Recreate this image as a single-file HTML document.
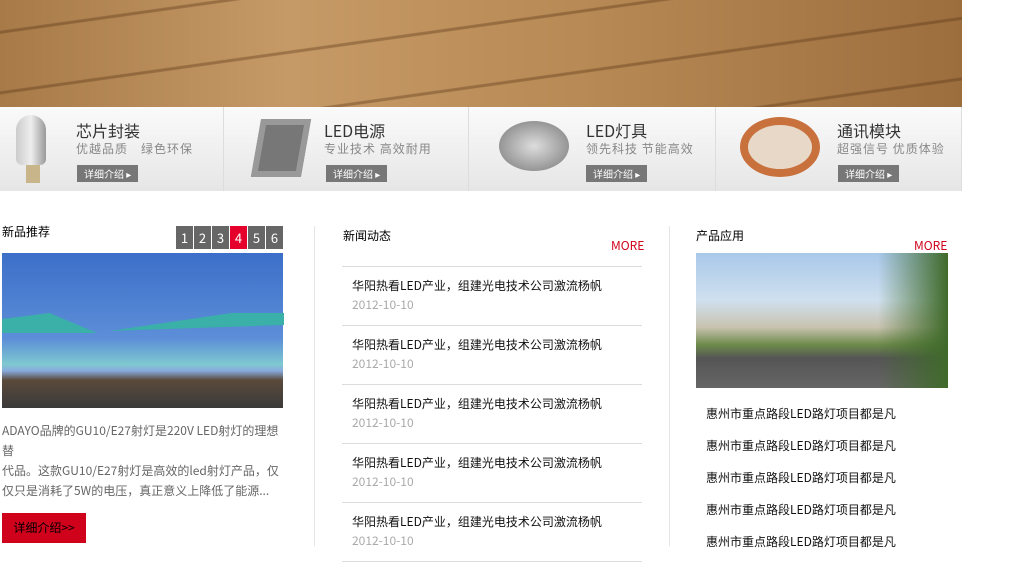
<!DOCTYPE html><html><head><meta charset="utf-8"><style>
*{margin:0;padding:0;box-sizing:border-box}
body{width:1015px;height:586px;background:#fff;font-family:"Noto Sans CJK SC","Liberation Sans",sans-serif;position:relative;overflow:hidden}
.a{position:absolute}
.wood{left:0;top:0;width:962px;height:107px;background:
repeating-linear-gradient(172deg,rgba(80,50,20,.0) 0 30px,rgba(80,45,15,.35) 31px 33px,rgba(0,0,0,0) 34px 60px),
linear-gradient(90deg,#a77a48,#c69a66 30%,#b88a55 60%,#9c6e3e);}
.cell{top:107px;height:84px;width:245px;background:linear-gradient(#fafafa,#e6e6e6);border-right:1px solid #ddd}
.cell h3{position:absolute;top:12px;font-size:16px;font-weight:normal;color:#333;line-height:22px}
.cell p{position:absolute;top:34px;font-size:12px;color:#888;letter-spacing:1px;line-height:16px}
.cell span{position:absolute;top:58px;background:#777;color:#fff;font-size:10px;padding:0 7px;height:17px;line-height:17px}
.ttl{font-size:12px;color:#000;line-height:16px}
.more{font-size:12px;color:#d0021b;line-height:14px}
.pg{top:226px;width:17px;height:23px;background:#666;color:#fff;font-size:13px;text-align:center;line-height:23px}
.nt{left:352px;font-size:12px;color:#111;line-height:16px}
.nd{left:352px;font-size:12px;color:#aaa;line-height:16px}
.ln{left:342px;width:300px;height:1px;background:#ddd}
.rl{left:706px;font-size:12px;color:#111;line-height:16px}
</style></head><body>
<div class="a wood"></div>
<div class="a cell" style="left:0;width:224px"><div class="a" style="left:16px;top:8px;width:30px;height:50px;border-radius:15px 15px 6px 6px;background:linear-gradient(90deg,#ccc,#eee,#999)"></div><div class="a" style="left:26px;top:58px;width:14px;height:18px;background:#c9b58a"></div><h3 style="left:76px">芯片封装</h3><p style="left:76px">优越品质　绿色环保</p><span style="left:77px">详细介绍 ▸</span></div>
<div class="a cell" style="left:224px"><div class="a" style="left:32px;top:12px;width:50px;height:58px;background:#777;transform:skew(-10deg);border:6px solid #999"></div><h3 style="left:100px">LED电源</h3><p style="left:100px">专业技术 高效耐用</p><span style="left:102px">详细介绍 ▸</span></div>
<div class="a cell" style="left:469px;width:247px"><div class="a" style="left:30px;top:14px;width:70px;height:50px;border-radius:50%;background:radial-gradient(#ddd,#777)"></div><h3 style="left:117px">LED灯具</h3><p style="left:117px">领先科技 节能高效</p><span style="left:117px">详细介绍 ▸</span></div>
<div class="a cell" style="left:716px;width:246px"><div class="a" style="left:24px;top:10px;width:80px;height:60px;border-radius:50%;border:8px solid #c8713d;background:#e8d8c8"></div><h3 style="left:121px">通讯模块</h3><p style="left:121px">超强信号 优质体验</p><span style="left:122px">详细介绍 ▸</span></div>

<div class="a ttl" style="left:2px;top:224px">新品推荐</div>
<div class="a pg" style="left:176px">1</div><div class="a pg" style="left:194px">2</div><div class="a pg" style="left:212px">3</div><div class="a pg" style="left:230px;background:#e4002b">4</div><div class="a pg" style="left:248px">5</div><div class="a pg" style="left:266px">6</div>
<div class="a" style="left:2px;top:253px;width:281px;height:155px;background:linear-gradient(#3c6fc8 0,#5c8ed8 55%,#7fc9d0 72%,#8ad 76%,#5a4a3a 82%,#3a3a3a 100%)"><div class="a" style="left:0;top:60px;width:95px;height:20px;background:#3ab0a8;clip-path:polygon(0 30%,50% 0,100% 100%,0 100%)"></div><div class="a" style="left:107px;top:60px;width:175px;height:20px;background:#3ab0a8;clip-path:polygon(0 90%,70% 0,100% 0,100% 60%)"></div></div>
<div class="a" style="left:2px;top:421px;width:282px;font-size:12px;line-height:20px;color:#666">ADAYO品牌的GU10/E27射灯是220V LED射灯的理想替<br>代品。这款GU10/E27射灯是高效的led射灯产品，仅仅只是消耗了5W的电压，真正意义上降低了能源...</div>
<div class="a" style="left:2px;top:513px;width:84px;height:30px;background:#d0021b;color:#000;font-size:12px;line-height:30px;text-align:center">详细介绍&gt;&gt;</div>
<div class="a" style="left:314px;top:226px;width:1px;height:320px;background:#e5e5e5"></div>

<div class="a ttl" style="left:343px;top:228px">新闻动态</div>
<div class="a more" style="left:611px;top:239px">MORE</div>
<div class="a ln" style="top:266px"></div><div class="a nt" style="top:278px">华阳热看LED产业，组建光电技术公司激流杨帆</div><div class="a nd" style="top:297px">2012-10-10</div>
<div class="a ln" style="top:325px"></div><div class="a nt" style="top:337px">华阳热看LED产业，组建光电技术公司激流杨帆</div><div class="a nd" style="top:356px">2012-10-10</div>
<div class="a ln" style="top:384px"></div><div class="a nt" style="top:396px">华阳热看LED产业，组建光电技术公司激流杨帆</div><div class="a nd" style="top:415px">2012-10-10</div>
<div class="a ln" style="top:443px"></div><div class="a nt" style="top:455px">华阳热看LED产业，组建光电技术公司激流杨帆</div><div class="a nd" style="top:474px">2012-10-10</div>
<div class="a ln" style="top:502px"></div><div class="a nt" style="top:514px">华阳热看LED产业，组建光电技术公司激流杨帆</div><div class="a nd" style="top:533px">2012-10-10</div>
<div class="a ln" style="top:561px"></div>
<div class="a" style="left:669px;top:226px;width:1px;height:320px;background:#e5e5e5"></div>

<div class="a ttl" style="left:696px;top:228px">产品应用</div>
<div class="a more" style="left:914px;top:239px">MORE</div>
<div class="a" style="left:696px;top:253px;width:252px;height:135px;background:linear-gradient(#a9c8ea 0,#cfe0ef 35%,#c9c3b0 55%,#6d8a4a 68%,#555 78%,#666 100%)"><div class="a" style="right:0;top:0;width:70px;height:135px;background:linear-gradient(90deg,transparent,#3f6a2a)"></div></div>
<div class="a rl" style="top:406px">惠州市重点路段LED路灯项目都是凡</div>
<div class="a rl" style="top:438px">惠州市重点路段LED路灯项目都是凡</div>
<div class="a rl" style="top:470px">惠州市重点路段LED路灯项目都是凡</div>
<div class="a rl" style="top:502px">惠州市重点路段LED路灯项目都是凡</div>
<div class="a rl" style="top:534px">惠州市重点路段LED路灯项目都是凡</div>
</body></html>
